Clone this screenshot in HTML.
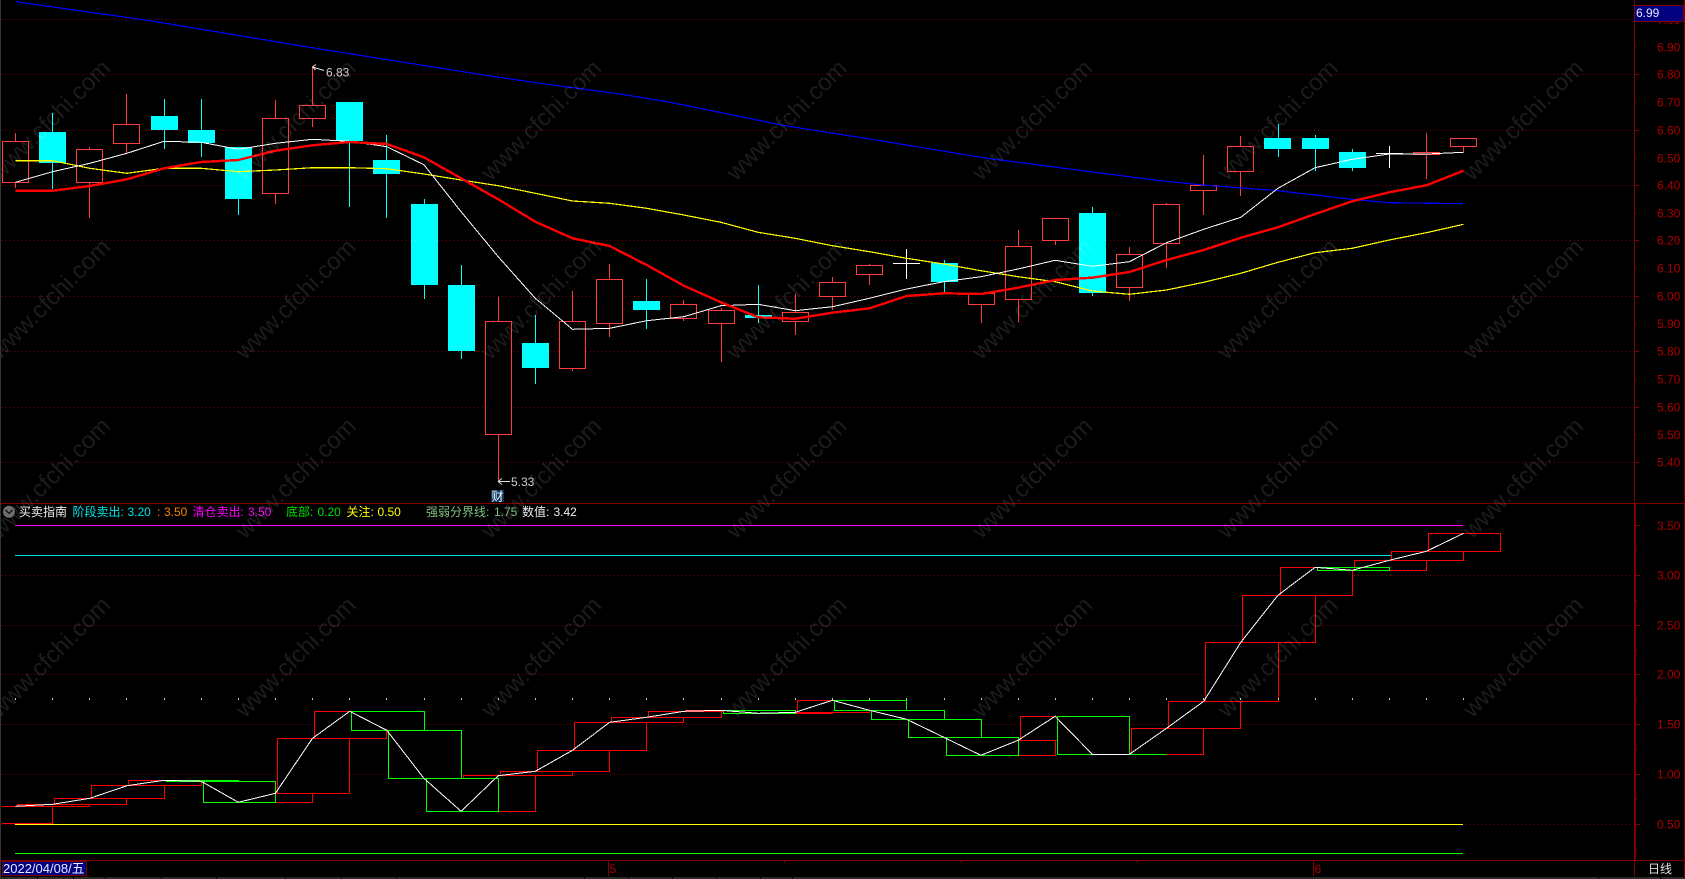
<!DOCTYPE html>
<html><head><meta charset="utf-8"><title>K</title>
<style>
html,body{margin:0;padding:0;background:#000;width:1685px;height:879px;overflow:hidden}
svg{display:block;position:absolute;left:0;top:0}
text{font-family:"Liberation Sans","Noto Sans CJK SC",sans-serif;font-size:12px}
</style></head><body>
<svg width="1685" height="879" viewBox="0 0 1685 879" xmlns="http://www.w3.org/2000/svg">
<rect width="1685" height="879" fill="#000"/>
<!-- grid -->
<path shape-rendering="crispEdges" stroke="#8a0000" stroke-width="1" stroke-dasharray="1 3" fill="none" d="M2 19.5H1634M2 74.5H1634M2 130.5H1634M2 185.5H1634M2 240.5H1634M2 296.5H1634M2 351.5H1634M2 407.5H1634M2 462.5H1634M2 575.5H1634M2 625.5H1634M2 674.5H1634M2 724.5H1634M2 774.5H1634M2 824.5H1634"/>
<!-- frame -->
<g shape-rendering="crispEdges">
<rect x="0" y="0" width="1" height="879" fill="#353535"/>
<rect x="1684" y="0" width="1" height="877" fill="#800000"/>
<rect x="1" y="503" width="1684" height="1" fill="#800000"/>
<rect x="1" y="860" width="1684" height="1" fill="#800000"/>
<rect x="1634" y="0" width="1" height="503" fill="#800000"/>
<rect x="1634" y="503" width="2" height="358" fill="#800000"/>
<rect x="1634" y="861" width="1" height="16" fill="#800000"/>
<rect x="0" y="877" width="1685" height="2" fill="#2a2a2a"/>
<path stroke="#000" d="M37.5 877V879M73.5 877V879M105.5 877V879M161.5 877V879M216.5 877V879M285.5 877V879M341.5 877V879M396.5 877V879M584.5 877V879M628.5 877V879M672.5 877V879M716.5 877V879M760.5 877V879M792.5 877V879M1598.5 877V879M1660.5 877V879"/>
<path stroke="#800000" fill="none" d="M1634 46.5h2M1634 74.5h5M1634 102.5h2M1634 130.5h5M1634 158.5h2M1634 185.5h5M1634 213.5h2M1634 240.5h5M1634 268.5h2M1634 296.5h5M1634 323.5h2M1634 351.5h5M1634 379.5h2M1634 407.5h5M1634 434.5h2M1634 462.5h5M1635 525.5h5M1635 550.5h2M1635 575.5h5M1635 600.5h2M1635 625.5h5M1635 650.5h2M1635 674.5h5M1635 699.5h2M1635 724.5h5M1635 749.5h2M1635 774.5h5M1635 799.5h2M1635 824.5h5M1635 849.5h2"/>
<path stroke="#800000" fill="none" d="M608.5 861V876M1313.5 861V876M784.5 861V863M961.5 861V863M1137.5 861V863"/>
</g>
<!-- candle wicks -->
<g shape-rendering="crispEdges" fill="none" stroke-width="1">
<path stroke="#ff3c3c" d="M15.5 133V141M15.5 183V188M89.5 147V149M89.5 183V218M126.5 94V124M126.5 144V153M275.5 100V118M275.5 194V204M312.5 66V105M312.5 119V127M498.5 297V321M498.5 435V482M572.5 291V321M572.5 369V371M609.5 264V279M609.5 324V337M683.5 300V304M683.5 319V321M721.5 308V310M721.5 324V362M795.5 294V312M795.5 322V335M832.5 277V282M832.5 297V310M869.5 264V265M869.5 275V285M981.5 305V323M1018.5 230V246M1018.5 300V322M1055.5 241V245M1129.5 247V254M1129.5 288V301M1166.5 203V204M1166.5 244V268M1203.5 155V185M1203.5 191V215M1240.5 136V146M1240.5 172V196M1426.5 133V152M1426.5 155V179M1463.5 147V152"/>
<path stroke="#ff3c3c" fill="#000" d="M2.5 141.5h26v41h-26zM76.5 149.5h26v33h-26zM113.5 124.5h26v19h-26zM262.5 118.5h26v75h-26zM299.5 105.5h26v13h-26zM485.5 321.5h26v113h-26zM559.5 321.5h26v47h-26zM596.5 279.5h26v44h-26zM670.5 304.5h26v14h-26zM708.5 310.5h26v13h-26zM782.5 312.5h26v9h-26zM819.5 282.5h26v14h-26zM856.5 265.5h26v9h-26zM968.5 293.5h26v11h-26zM1005.5 246.5h26v53h-26zM1042.5 218.5h26v22h-26zM1116.5 254.5h26v33h-26zM1153.5 204.5h26v39h-26zM1190.5 185.5h26v5h-26zM1227.5 146.5h26v25h-26zM1413.5 152.5h26v2h-26zM1450.5 138.5h26v8h-26z"/>
<path stroke="#00ffff" d="M52.5 113V189M164.5 99V149M201.5 99V157M238.5 147V215M349.5 102V207M386.5 135V218M424.5 199V299M461.5 265V359M535.5 315V384M646.5 279V329M758.5 285V323M944.5 260V292M1092.5 207V296M1278.5 124V157M1315.5 135V171M1352.5 149V171"/>
<g fill="#00ffff">
<rect x="39" y="132" width="27" height="31"/><rect x="151" y="116" width="27" height="14"/><rect x="188" y="130" width="27" height="13"/><rect x="225" y="147" width="27" height="52"/><rect x="336" y="102" width="27" height="39"/><rect x="373" y="160" width="27" height="14"/><rect x="411" y="204" width="27" height="81"/><rect x="448" y="285" width="27" height="66"/><rect x="522" y="343" width="27" height="25"/><rect x="633" y="301" width="27" height="9"/><rect x="745" y="315" width="27" height="3"/><rect x="931" y="263" width="27" height="19"/><rect x="1079" y="213" width="27" height="80"/><rect x="1264" y="138" width="27" height="11"/><rect x="1302" y="138" width="27" height="11"/><rect x="1339" y="152" width="27" height="16"/>
</g>
<path stroke="#ffffff" d="M906.5 249V279M893 263.5H920M1389.5 146V168M1376 153.5H1403"/>
</g>
<!-- MA lines -->
<g fill="none" stroke-linejoin="round" shape-rendering="crispEdges">
<polyline stroke="#0000ff" stroke-width="1.2" points="15.8,1.7 150,20.7 312,47.7 490,76 540,83.3 620,94 670.5,102.3 785,125.7 876,140 987,158.3 1160,180.7 1203,185 1277.5,190.7 1352,199.3 1389.5,202.7 1463,203.7"/>
<polyline stroke="#ffff00" stroke-width="1.2" points="15.5,160.7 52.6,160.7 89.8,168.3 126.9,173.3 164,168.3 201.2,168.3 238.3,171.7 275.4,170 312.5,167.7 349.7,167.7 386.8,168.7 423.9,174 461.1,180 498.2,185.7 535.3,193.3 572.5,201 609.6,203.3 646.7,208.3 683.8,215 721,222.3 758.1,232.3 795.2,238.3 832.4,245.7 869.5,251.7 906.6,258.3 943.8,264 980.9,270.7 1018,276.7 1055.1,281.7 1092.3,291 1129.4,294.3 1166.5,290 1203.7,282.3 1240.8,273.3 1277.9,262.3 1315.1,252.7 1352.2,248.3 1389.3,240 1426.4,232.7 1463.6,224.3"/>
<polyline stroke="#ffffff" stroke-width="1" points="15.5,182.3 52.6,171.7 89.8,163.3 126.9,153.3 164,141.3 201.2,142.3 238.3,149.3 275.4,143.3 312.5,139.3 349.7,141.3 386.8,146.7 423.9,164.7 461.1,211.7 498.2,256.7 535.3,298.3 572.5,329.3 609.6,328.3 646.7,320.7 683.8,316.7 721,305.7 758.1,304.3 795.2,310.7 832.4,306.7 869.5,298.3 906.6,289 943.8,281.7 980.9,276.7 1018,269 1055.1,260.3 1092.3,266.3 1129.4,261.7 1166.5,242.7 1203.7,229.3 1240.8,217.3 1277.9,188.3 1315.1,167.7 1352.2,159.3 1389.3,154 1426.4,154 1463.6,152.3"/>
<polyline stroke="#ff0000" stroke-width="2.4" points="15.5,190.7 52.6,190.7 89.8,186 126.9,179.3 164,168.3 201.2,162 238.3,160 275.4,150.7 312.5,145.3 349.7,142 386.8,144 423.9,157.3 461.1,178.3 498.2,199.3 535.3,221.7 572.5,238.3 609.6,246 646.7,265 683.8,285.7 721,302.3 758.1,317.3 795.2,318.7 832.4,312.7 869.5,308.3 906.6,296 943.8,293.3 980.9,294 1018,287.7 1055.1,280 1092.3,277.7 1129.4,272 1166.5,260 1203.7,250 1240.8,237.7 1277.9,227.3 1315.1,214 1352.2,201.3 1389.3,192.3 1426.4,185.3 1463.6,170.7"/>
</g>
<!-- price marks -->
<path fill="none" stroke="#e0e0e0" stroke-width="1" d="M312.5 67L324 70.5M312.5 67L316 64.5M312.5 67L315.5 70M498 481.5H510M498 481.5L502 478.5M498 481.5L502 484.5"/>
<text x="326" y="76.5" fill="#cfcfcf">6.83</text>
<text x="511" y="486" fill="#cfcfcf">5.33</text>
<rect x="491" y="490" width="13" height="12" fill="#0c3560"/>
<text x="491.5" y="500.5" fill="#ffffff">财</text>
<!-- lower panel lines -->
<g shape-rendering="crispEdges" fill="none">
<path stroke="#ff00ff" d="M15 525.5H1463"/>
<path stroke="#00e6e6" d="M15 555.5H1463"/>
<path stroke="#ffff00" d="M15 824.5H1463" stroke-width="1"/>
<path stroke="#00ff00" d="M15 853.5H1463"/>
<path stroke="#ff0000" fill="#000" d="M2 806.5H52.5V823.5H2M17.5 804.5h72v2h-72zM54.5 798.5h72v6h-72zM91.5 785.5h73v13h-73zM128.5 780.5h73v5h-73zM240.5 793.5h72v9h-72zM277.5 738.5h72v55h-72zM314.5 711.5h72v27h-72zM463.5 775.5h72v36h-72zM500.5 771.5h72v4h-72zM537.5 750.5h72v21h-72zM574.5 722.5h72v28h-72zM611.5 717.5h72v5h-72zM648.5 711.5h73v6h-73zM685.5 710.5h73v1h-73zM760.5 712.5h72v1h-72zM797.5 700.5h72v12h-72zM983.5 740.5h72v15h-72zM1020.5 716.5h72v24h-72zM1131.5 728.5h72v26h-72zM1168.5 701.5h72v27h-72zM1205.5 642.5h73v59h-73zM1242.5 595.5h73v47h-73zM1280.5 567.5h72v28h-72zM1354.5 560.5h72v10h-72zM1391.5 551.5h72v9h-72zM1428.5 533.5h72v18h-72z"/>
<path stroke="#00ff00" fill="#000" d="M166.5 780.5h72v1h-72zM203.5 781.5h72v21h-72zM351.5 711.5h73v19h-73zM388.5 730.5h73v48h-73zM426.5 778.5h72v33h-72zM723.5 710.5h72v3h-72zM834.5 700.5h72v10h-72zM871.5 710.5h73v9h-73zM908.5 719.5h73v18h-73zM946.5 737.5h72v18h-72zM1057.5 716.5h72v38h-72zM1094.5 754.5h72M1317.5 567.5h72v3h-72z"/>
<path stroke="#a8e890" stroke-width="1" d="M15.5 698V700M52.5 698V700M89.5 698V700M126.5 698V700M164.5 698V700M201.5 698V700M238.5 698V700M275.5 698V700M312.5 698V700M349.5 698V700M386.5 698V700M424.5 698V700M461.5 698V700M498.5 698V700M535.5 698V700M572.5 698V700M609.5 698V700M646.5 698V700M683.5 698V700M721.5 698V700M758.5 698V700M795.5 698V700M832.5 698V700M869.5 698V700M906.5 698V700M944.5 698V700M981.5 698V700M1018.5 698V700M1055.5 698V700M1092.5 698V700M1129.5 698V700M1166.5 698V700M1203.5 698V700M1240.5 698V700M1278.5 698V700M1315.5 698V700M1352.5 698V700M1389.5 698V700M1426.5 698V700M1463.5 698V700"/>
</g>
<polyline fill="none" stroke="#ffffff" stroke-width="1" shape-rendering="crispEdges" points="15.5,806.3 52.6,804.3 89.8,798.3 126.9,785.7 164,780.3 201.2,781.3 238.3,802.3 275.4,793.3 312.5,738.3 349.7,711.3 386.8,730.3 423.9,778.3 461.1,811.3 498.2,775.7 535.3,771.3 572.5,750.3 609.6,722.3 646.7,717.3 683.8,711.3 721,710.3 758.1,713.3 795.2,712.3 832.4,700.3 869.5,710.3 906.6,719.3 943.8,737.3 980.9,755.3 1018,740.3 1055.1,716.3 1092.3,754.3 1129.4,754.3 1166.5,728.3 1203.7,701.3 1240.8,642.3 1277.9,595.3 1315.1,567.3 1352.2,570.3 1389.3,560.3 1426.4,551.3 1463.6,533.3"/>
<!-- legend -->
<circle cx="9" cy="511.7" r="6" fill="#707070"/>
<path d="M5.5 510l3.5 3.5 3.5-3.5" fill="none" stroke="#141414" stroke-width="1.5"/>
<text x="19" y="516" fill="#f0f0f0">买卖指南</text>
<text x="72.5" y="516" fill="#00e6e6">阶段卖出:</text><text x="127.5" y="516" fill="#00e6e6">3.20</text>
<text x="157" y="516" fill="#ff8000">:</text><text x="164" y="516" fill="#ff8000">3.50</text>
<text x="192.5" y="516" fill="#ff00ff">清仓卖出:</text><text x="248" y="516" fill="#ff00ff">3.50</text>
<text x="286" y="516" fill="#00e000">底部:</text><text x="317.5" y="516" fill="#00e000">0.20</text>
<text x="346.5" y="516" fill="#ffff00">关注:</text><text x="377.5" y="516" fill="#ffff00">0.50</text>
<text x="426" y="516" fill="#80c080">强弱分界线:</text><text x="494" y="516" fill="#80c080">1.75</text>
<text x="522" y="516" fill="#f0f0f0">数值:</text><text x="553.5" y="516" fill="#f0f0f0">3.42</text>
<!-- axis labels -->
<g fill="#aa0000">
<text x="1657" y="24">7.00</text>
<text x="1657" y="51.5">6.90</text><text x="1657" y="78.5">6.80</text><text x="1657" y="106.5">6.70</text><text x="1657" y="134.5">6.60</text><text x="1657" y="162.5">6.50</text><text x="1657" y="189.5">6.40</text><text x="1657" y="217.5">6.30</text><text x="1657" y="244.5">6.20</text><text x="1657" y="272.5">6.10</text><text x="1657" y="300.5">6.00</text><text x="1657" y="328">5.90</text><text x="1657" y="355.5">5.80</text><text x="1657" y="383.5">5.70</text><text x="1657" y="411.5">5.60</text><text x="1657" y="439">5.50</text><text x="1657" y="466.5">5.40</text>
<text x="1657" y="530">3.50</text><text x="1657" y="579.5">3.00</text><text x="1657" y="629.5">2.50</text><text x="1657" y="678.5">2.00</text><text x="1657" y="728.5">1.50</text><text x="1657" y="778.5">1.00</text><text x="1657" y="828.5">0.50</text>
<text x="609.5" y="873">5</text><text x="1314.5" y="873">6</text>
</g>
<rect x="1634.5" y="5.5" width="49" height="16" fill="#000080" stroke="#800000" shape-rendering="crispEdges"/>
<text x="1636" y="17" fill="#e8e8ff">6.99</text>
<rect x="2.5" y="861.5" width="84" height="14" fill="#000080" stroke="#800000" shape-rendering="crispEdges"/>
<text x="3" y="873" fill="#e8e8ff" style="font-size:13px">2022/04/08/五</text>
<text x="1648" y="873" fill="#e0e0e0">日线</text>
<!-- watermark overlay -->
<g fill="#1c1c1c" text-anchor="middle" style="mix-blend-mode:lighten">
<text transform="rotate(-45 50 120)" x="50" y="128" style="font-size:24px">www.cfchi.com</text>
<text transform="rotate(-45 295.5 120)" x="295.5" y="128" style="font-size:24px">www.cfchi.com</text>
<text transform="rotate(-45 541 120)" x="541" y="128" style="font-size:24px">www.cfchi.com</text>
<text transform="rotate(-45 786.5 120)" x="786.5" y="128" style="font-size:24px">www.cfchi.com</text>
<text transform="rotate(-45 1032 120)" x="1032" y="128" style="font-size:24px">www.cfchi.com</text>
<text transform="rotate(-45 1277.5 120)" x="1277.5" y="128" style="font-size:24px">www.cfchi.com</text>
<text transform="rotate(-45 1523 120)" x="1523" y="128" style="font-size:24px">www.cfchi.com</text>
<text transform="rotate(-45 50 299)" x="50" y="307" style="font-size:24px">www.cfchi.com</text>
<text transform="rotate(-45 295.5 299)" x="295.5" y="307" style="font-size:24px">www.cfchi.com</text>
<text transform="rotate(-45 541 299)" x="541" y="307" style="font-size:24px">www.cfchi.com</text>
<text transform="rotate(-45 786.5 299)" x="786.5" y="307" style="font-size:24px">www.cfchi.com</text>
<text transform="rotate(-45 1032 299)" x="1032" y="307" style="font-size:24px">www.cfchi.com</text>
<text transform="rotate(-45 1277.5 299)" x="1277.5" y="307" style="font-size:24px">www.cfchi.com</text>
<text transform="rotate(-45 1523 299)" x="1523" y="307" style="font-size:24px">www.cfchi.com</text>
<text transform="rotate(-45 50 478)" x="50" y="486" style="font-size:24px">www.cfchi.com</text>
<text transform="rotate(-45 295.5 478)" x="295.5" y="486" style="font-size:24px">www.cfchi.com</text>
<text transform="rotate(-45 541 478)" x="541" y="486" style="font-size:24px">www.cfchi.com</text>
<text transform="rotate(-45 786.5 478)" x="786.5" y="486" style="font-size:24px">www.cfchi.com</text>
<text transform="rotate(-45 1032 478)" x="1032" y="486" style="font-size:24px">www.cfchi.com</text>
<text transform="rotate(-45 1277.5 478)" x="1277.5" y="486" style="font-size:24px">www.cfchi.com</text>
<text transform="rotate(-45 1523 478)" x="1523" y="486" style="font-size:24px">www.cfchi.com</text>
<text transform="rotate(-45 50 657)" x="50" y="665" style="font-size:24px">www.cfchi.com</text>
<text transform="rotate(-45 295.5 657)" x="295.5" y="665" style="font-size:24px">www.cfchi.com</text>
<text transform="rotate(-45 541 657)" x="541" y="665" style="font-size:24px">www.cfchi.com</text>
<text transform="rotate(-45 786.5 657)" x="786.5" y="665" style="font-size:24px">www.cfchi.com</text>
<text transform="rotate(-45 1032 657)" x="1032" y="665" style="font-size:24px">www.cfchi.com</text>
<text transform="rotate(-45 1277.5 657)" x="1277.5" y="665" style="font-size:24px">www.cfchi.com</text>
<text transform="rotate(-45 1523 657)" x="1523" y="665" style="font-size:24px">www.cfchi.com</text>
</g>
</svg>
</body></html>
